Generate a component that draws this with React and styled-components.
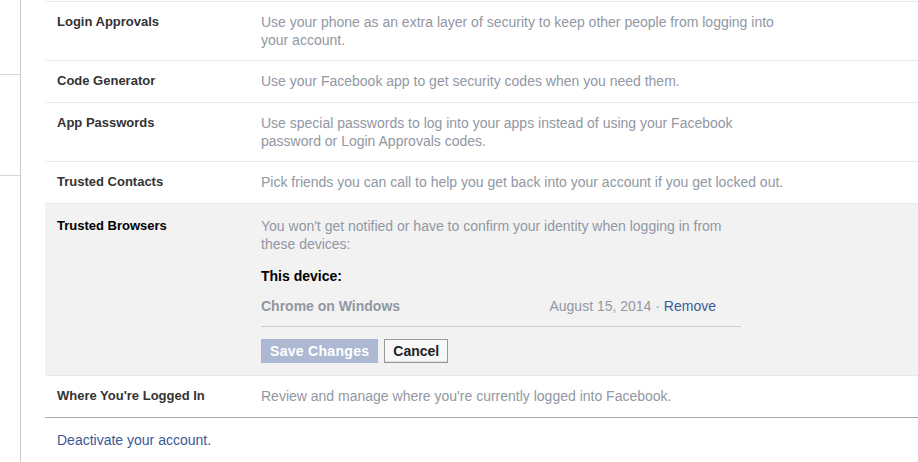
import React from 'react';
import styled, { createGlobalStyle } from 'styled-components';

const GlobalStyle = createGlobalStyle`
	body {
		margin: 0;
		background: #fff;
		font-family: 'Liberation Sans', Arial, sans-serif;
		font-size: 13px;
		line-height: 18px;
	}
`;

const Page = styled.div`
	display: grid;
	grid-template-columns: 21px 1fr;
	column-gap: 24px;
	width: 918px;
	height: 462px;
	overflow: hidden;
`;

const Sidebar = styled.div`
	border-right: 1px solid #ccc;
	display: flex;
	flex-direction: column;
	padding-top: 74px;
`;

const SideItem = styled.div`
	height: 100px;
	border-top: 1px solid #d6d6d6;
`;

const Main = styled.div`
	padding-top: 1px;
`;

const List = styled.div`
	border-top: 1px solid #e9e9e9;
	border-bottom: 1px solid #aaa;
`;

const Row = styled.div`
	display: grid;
	grid-template-columns: 204px 533px;
	min-height: 19px;
	padding: ${({ open }) => (open ? '13px 12px 12px' : '11px 12px')};
	background: ${({ open }) => (open ? '#f2f2f2' : '#fff')};
	& + & {
		border-top: 1px solid #e9e9e9;
	}
`;

const Label = styled.div`
	font-weight: bold;
	color: ${({ open }) => (open ? '#000' : '#333')};
`;

const Desc = styled.div`
	font-size: 14px;
	color: #9197a3;
`;

const Details = styled.div`
	width: 480px;
	display: flex;
	flex-direction: column;
	font-size: 14px;
`;

const Heading = styled.div`
	font-weight: bold;
	color: #000;
	margin-top: 14px;
`;

const DeviceLine = styled.div`
	display: flex;
	justify-content: space-between;
	padding: 12px 25px 11px 0;
	border-bottom: 1px solid #ccc;
`;

const DeviceName = styled.span`
	font-weight: bold;
	color: #9197a3;
`;

const DeviceDate = styled.span`
	color: #9197a3;
`;

const Link = styled.a`
	color: #3b5998;
	text-decoration: none;
	cursor: pointer;
`;

const Buttons = styled.div`
	display: flex;
	gap: 6px;
	margin-top: 12px;
`;

const Button = styled.button`
	height: 24px;
	padding: 0 8px;
	font-family: 'Liberation Sans', Arial, sans-serif;
	font-size: 14px;
	font-weight: bold;
	letter-spacing: ${({ primary }) => (primary ? '0.3px' : '0')};
	border: 1px solid ${({ primary }) => (primary ? '#a9b7d1' : '#999')};
	background: ${({ primary }) => (primary ? '#adb9d3' : '#f6f7f8')};
	color: ${({ primary }) => (primary ? '#fff' : '#222')};
	box-shadow: ${({ primary }) => (primary ? 'none' : 'inset 0 -1px 0 #ddd')};
	cursor: pointer;
`;

const Footer = styled.div`
	padding: 13px 12px 12px;
	font-size: 14px;
`;

const rows = [
	{
		label: 'Login Approvals',
		desc: 'Use your phone as an extra layer of security to keep other people from logging into your account.',
	},
	{
		label: 'Code Generator',
		desc: 'Use your Facebook app to get security codes when you need them.',
	},
	{
		label: 'App Passwords',
		desc: 'Use special passwords to log into your apps instead of using your Facebook password or Login Approvals codes.',
	},
	{
		label: 'Trusted Contacts',
		desc: 'Pick friends you can call to help you get back into your account if you get locked out.',
	},
];

const App = () => (
	<>
		<GlobalStyle />
		<Page>
			<Sidebar>
				<SideItem />
				<SideItem />
			</Sidebar>
			<Main>
				<List>
					{rows.map((r) => (
						<Row key={r.label}>
							<Label>{r.label}</Label>
							<Desc>{r.desc}</Desc>
						</Row>
					))}
					<Row open>
						<Label open>Trusted Browsers</Label>
						<Details>
							<Desc>
								You won't get notified or have to confirm your identity when logging in from
								these devices:
							</Desc>
							<Heading>This device:</Heading>
							<DeviceLine>
								<DeviceName>Chrome on Windows</DeviceName>
								<span>
									<DeviceDate>August 15, 2014 · </DeviceDate>
									<Link>Remove</Link>
								</span>
							</DeviceLine>
							<Buttons>
								<Button primary>Save Changes</Button>
								<Button>Cancel</Button>
							</Buttons>
						</Details>
					</Row>
					<Row>
						<Label>Where You're Logged In</Label>
						<Desc>Review and manage where you're currently logged into Facebook.</Desc>
					</Row>
				</List>
				<Footer>
					<Link>Deactivate your account.</Link>
				</Footer>
			</Main>
		</Page>
	</>
);

export default App;
